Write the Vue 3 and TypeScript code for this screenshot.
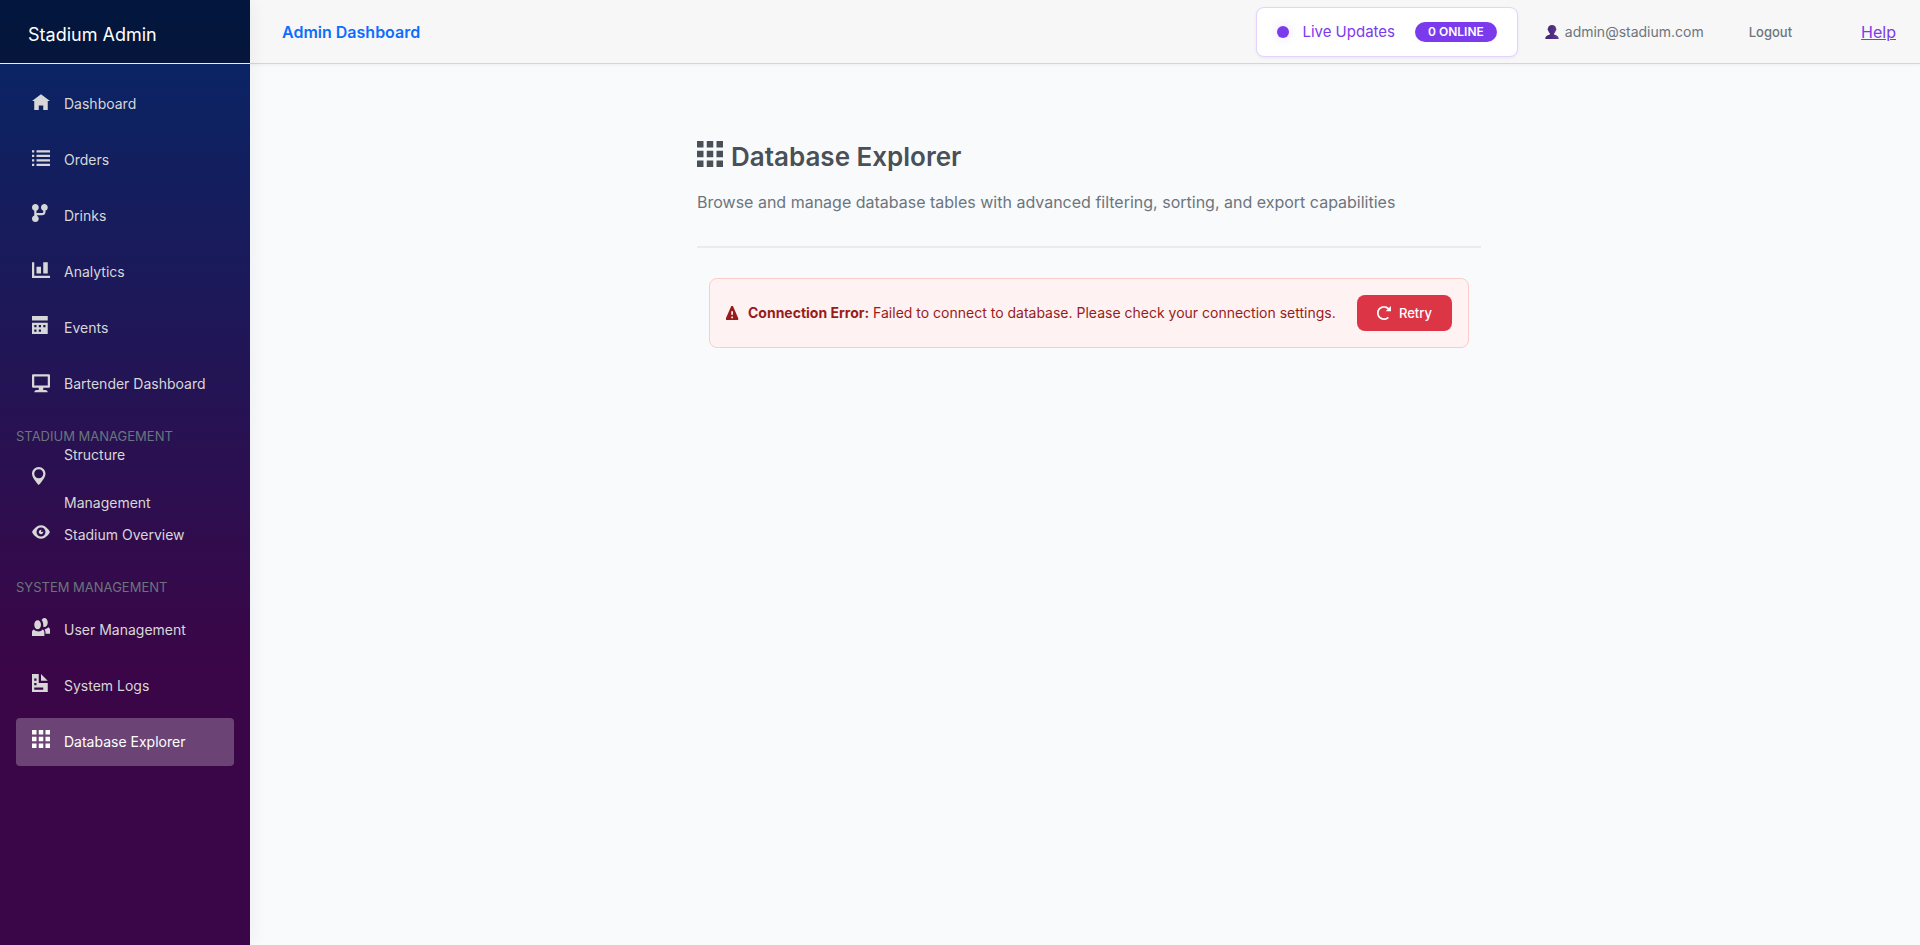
<script setup lang="ts">
interface NavItem {
  label: string
  icon: string
  active?: boolean
}
interface NavSection {
  heading?: string
  items: NavItem[]
}

// Icon outlines on an 8 x 8 grid
const icons: Record<string, string> = {
  home: 'M4 1l-4 3h1v4h2v-2h2v2h2v-4.03l1 .03-4-3z',
  list: 'M0 1v1h1v-1h-1zm2 0v1h6v-1h-6zm-2 2v1h1v-1h-1zm2 0v1h6v-1h-6zm-2 2v1h1v-1h-1zm2 0v1h6v-1h-6zm-2 2v1h1v-1h-1zm2 0v1h6v-1h-6z',
  fork: 'M1.5 0c-.83 0-1.5.67-1.5 1.5 0 .66.41 1.2 1 1.41v2.19c-.59.2-1 .75-1 1.41 0 .83.67 1.5 1.5 1.5s1.5-.67 1.5-1.5c0-.6-.34-1.1-.84-1.34.09-.09.21-.16.34-.16h2c.82 0 1.5-.68 1.5-1.5v-.59c.59-.2 1-.75 1-1.41 0-.83-.67-1.5-1.5-1.5s-1.5.67-1.5 1.5c0 .66.41 1.2 1 1.41v.59c0 .28-.22.5-.5.5h-2c-.17 0-.35.04-.5.09v-1.19c.59-.2 1-.75 1-1.41 0-.83-.67-1.5-1.5-1.5z',
  chart: 'M0 1v7h8v-1h-7v-6h-1zm5 0v5h2v-5h-2zm-3 2v3h2v-3h-2z',
  calendar: 'M0 0v2h7v-2h-7zm0 3v4.91c0 .05.04.09.09.09h6.81c.05 0 .09-.04.09-.09v-4.91h-7zm1 1h1v1h-1v-1zm2 0h1v1h-1v-1zm2 0h1v1h-1v-1zm-4 2h1v1h-1v-1zm2 0h1v1h-1v-1z',
  monitor: 'M.34 1a.5.5 0 0 0-.34.5v5a.5.5 0 0 0 .5.5h2.5v1h-1c-.55 0-1 .45-1 1h6c0-.55-.45-1-1-1h-1v-1h2.5a.5.5 0 0 0 .5-.5v-5a.5.5 0 0 0-.5-.5h-7.16zm.66 1h6v4h-6v-4z',
  marker: 'M3 0c-1.66 0-3 1.34-3 3 0 2 3 5 3 5s3-3 3-5c0-1.66-1.34-3-3-3zm0 1c1.11 0 2 .9 2 2 0 1.11-.89 2-2 2-1.1 0-2-.89-2-2 0-1.1.9-2 2-2z',
  eye: 'M4.03 1c-2.53 0-4.03 3-4.03 3s1.5 3 4.03 3c2.47 0 3.97-3 3.97-3s-1.5-3-3.97-3zm-.03 1c1.11 0 2 .9 2 2 0 1.11-.89 2-2 2-1.1 0-2-.89-2-2 0-1.1.9-2 2-2zm0 1c-.55 0-1 .45-1 1s.45 1 1 1 1-.45 1-1c0-.1-.04-.19-.06-.28-.08.16-.24.28-.44.28-.28 0-.5-.22-.5-.5 0-.2.12-.36.28-.44-.09-.03-.18-.06-.28-.06z',
  people: 'M5.5 0c-.51 0-.95.35-1.22.88.45.54.72 1.28.72 2.13 0 .29-.03.55-.09.81.19.11.38.19.59.19.83 0 1.5-.9 1.5-2s-.67-2-1.5-2zm-3 1c-.83 0-1.5.9-1.5 2s.67 2 1.5 2 1.5-.9 1.5-2-.67-2-1.5-2zm4.75 3.16c-.43.51-1.02.82-1.69.84.27.38.44.84.44 1.34v.66h2v-1.66c0-.52-.31-.97-.75-1.19zm-6.5 1c-.44.22-.75.67-.75 1.19v1.66h5.5v-1.66c0-.52-.31-.97-.75-1.19-.45.53-1.06.84-1.75.84s-1.8-.32-2.25-.84z',
  document: 'M0 0v8h7v-4h-4v-4h-3zm4 0v3h3l-3-3zm-3 2h1v1h-1v-1zm0 2h1v1h-1v-1zm0 2h4v1h-4v-1z',
  grid: 'M0 0v2h2v-2h-2zm3 0v2h2v-2h-2zm3 0v2h2v-2h-2zm-6 3v2h2v-2h-2zm3 0v2h2v-2h-2zm3 0v2h2v-2h-2zm-6 3v2h2v-2h-2zm3 0v2h2v-2h-2zm3 0v2h2v-2h-2z',
  warning: 'M3.09 0c-.06 0-.1.04-.13.09l-2.94 6.81c-.02.05-.03.13-.03.19v.81c0 .05.04.09.09.09h6.81c.05 0 .09-.04.09-.09v-.81c0-.05-.01-.14-.03-.19l-2.94-6.81c-.02-.05-.07-.09-.13-.09h-.81zm-.09 3h1v2h-1v-2zm0 3h1v1h-1v-1z',
  reload: 'M4 0c-2.2 0-4 1.8-4 4s1.8 4 4 4c1.1 0 2.12-.43 2.84-1.16l-.72-.72c-.54.54-1.29.88-2.13.88-1.66 0-3-1.34-3-3s1.34-3 3-3c.83 0 1.55.36 2.09.91l-1.09 1.09h3v-3l-1.19 1.19c-.72-.72-1.71-1.19-2.81-1.19z',
}

const sections: NavSection[] = [
  {
    items: [
      { label: 'Dashboard', icon: 'home' },
      { label: 'Orders', icon: 'list' },
      { label: 'Drinks', icon: 'fork' },
      { label: 'Analytics', icon: 'chart' },
      { label: 'Events', icon: 'calendar' },
      { label: 'Bartender Dashboard', icon: 'monitor' },
    ],
  },
  {
    heading: 'Stadium Management',
    items: [
      { label: 'Structure Management', icon: 'marker' },
      { label: 'Stadium Overview', icon: 'eye' },
    ],
  },
  {
    heading: 'System Management',
    items: [
      { label: 'User Management', icon: 'people' },
      { label: 'System Logs', icon: 'document' },
      { label: 'Database Explorer', icon: 'grid', active: true },
    ],
  },
]
</script>

<template>
  <div class="page">
    <aside class="sidebar">
      <div class="brand"><a href="#">Stadium Admin</a></div>
      <nav class="nav">
        <template v-for="(section, i) in sections" :key="i">
          <h2 v-if="section.heading" class="nav-heading">{{ section.heading }}</h2>
          <a
            v-for="item in section.items"
            :key="item.label"
            href="#"
            class="nav-link"
            :class="{ active: item.active }"
          >
            <svg class="nav-icon" viewBox="0 0 8 8" aria-hidden="true"><path :d="icons[item.icon]" /></svg>
            <span class="nav-text">{{ item.label }}</span>
          </a>
        </template>
      </nav>
    </aside>

    <div class="main">
      <header class="topbar">
        <span class="topbar-title">Admin Dashboard</span>
        <div class="live">
          <span class="live-dot"></span>
          <span class="live-label">Live Updates</span>
          <span class="live-badge">0 ONLINE</span>
        </div>
        <div class="user">
          <svg class="user-icon" viewBox="0 0 14 14" aria-hidden="true">
            <defs>
              <linearGradient id="bust" x1="0" y1="0" x2="1" y2="0">
                <stop offset="0" stop-color="#3f2470" />
                <stop offset="1" stop-color="#5f3a94" />
              </linearGradient>
            </defs>
            <path
              fill="url(#bust)"
              d="M7 0C4.600 0 3 1.300 3 3.600c-.6.200-.6 1.700.200 2 .3 1.300.9 2.200 1.700 2.800v1.200C3.200 10.200.5 10.600.3 14h13.400c-.2-3.400-2.900-3.800-4.600-4.400V8.400c.8-.6 1.400-1.500 1.700-2.800.8-.3.800-1.800.2-2C11 1.300 9.400 0 7 0z"
            />
          </svg>
          <span>admin@stadium.com</span>
        </div>
        <button type="button" class="logout">Logout</button>
        <a href="#" class="help">Help</a>
      </header>

      <main class="content">
        <div class="explorer">
          <div class="explorer-head">
            <h1>
              <svg class="title-icon" viewBox="0 0 8 8" aria-hidden="true"><path :d="icons.grid" /></svg>
              <span>Database Explorer</span>
            </h1>
            <p>Browse and manage database tables with advanced filtering, sorting, and export capabilities</p>
          </div>
          <div class="alert" role="alert">
            <svg class="alert-icon" viewBox="0 0 8 8" aria-hidden="true"><path :d="icons.warning" /></svg>
            <span class="alert-text"><strong>Connection Error:</strong> Failed to connect to database. Please check your connection settings.</span>
            <button type="button" class="retry">
              <svg class="retry-icon" viewBox="0 0 8 8" aria-hidden="true"><path :d="icons.reload" /></svg>
              Retry
            </button>
          </div>
        </div>
      </main>
    </div>
  </div>
</template>

<style>
body {
  background: #f9fafc;
}
</style>

<style scoped>
.page {
  display: flex;
  min-height: 100vh;
  font-family: Inter, "Liberation Sans", sans-serif;
  font-size: 16px;
}
.page * {
  box-sizing: border-box;
}
svg {
  display: block;
  flex: none;
  fill: currentColor;
  overflow: visible;
}

/* Sidebar */
.sidebar {
  flex: 0 0 250px;
  background: linear-gradient(180deg, #052767 0%, #3a0647 70%);
  box-shadow: 2px 0 16px rgba(0, 0, 0, 0.05);
  z-index: 1;
}
.brand {
  display: flex;
  align-items: center;
  height: 64px;
  padding: 6px 28px 0;
  background: rgba(0, 0, 0, 0.4);
  border-bottom: 1px solid #e9ecf4;
}
.brand a {
  color: #fff;
  font-size: 18px;
  text-decoration: none;
}
.nav {
  display: flex;
  flex-direction: column;
  gap: 8px;
  padding: 16px;
}
.nav-heading {
  margin: 0;
  padding: 10px 0 9px;
  color: #6c757d;
  font-size: 13px;
  font-weight: 400;
  line-height: 20px;
  text-transform: uppercase;
}
.nav-heading + .nav-link {
  margin-top: -8px;
}
.nav-link {
  display: flex;
  align-items: center;
  height: 48px;
  padding: 0 20px 0 16px;
  border-radius: 4px;
  color: #d7d7d7;
  font-size: 14px;
  line-height: 48px;
  text-decoration: none;
}
.nav-link.active {
  background: rgba(255, 255, 255, 0.25);
  color: #fff;
}
.nav-icon {
  width: 18px;
  height: 18px;
  margin: 0 14px 6px 0;
}

/* Top bar */
.main {
  flex: 1;
  min-width: 0;
}
.topbar {
  display: flex;
  align-items: center;
  height: 64px;
  padding: 0 24px 0 32px;
  background: #f7f7f7;
  border-bottom: 1px solid #d6d5d5;
  box-shadow: 0 1px 3px rgba(0, 0, 0, 0.05);
}
.topbar-title {
  margin-right: auto;
  color: #0d6efd;
  font-weight: 600;
}
.live {
  display: flex;
  align-items: center;
  height: 50px;
  padding: 0 20px;
  border: 1px solid #e1d5fb;
  border-radius: 8px;
  background: #fff;
  box-shadow: 0 1px 3px rgba(124, 58, 237, 0.1);
  color: #7c3aed;
}
.live-dot {
  width: 12px;
  height: 12px;
  margin-right: 13px;
  border-radius: 50%;
  background: #7c3aed;
  box-shadow: 0 0 12px rgba(124, 58, 237, 0.2);
}
.live-label {
  margin-right: 20px;
  font-size: 15px;
}
.live-badge {
  padding: 0 13px;
  border-radius: 10px;
  background: #7c3aed;
  color: #fff;
  font-size: 12px;
  font-weight: 600;
  line-height: 20px;
}
.user {
  display: flex;
  align-items: center;
  gap: 6px;
  margin-left: 27px;
  color: #6c757d;
  font-size: 14px;
}
.user-icon {
  width: 14px;
  height: 14px;
}
.logout {
  margin-left: 31px;
  padding: 6px 14px;
  border: 0;
  background: none;
  color: #6c757d;
  font: 500 13px Inter, "Liberation Sans", sans-serif;
}
.help {
  margin-left: 55px;
  color: #7c3aed;
}

/* Content */
.content {
  padding: 72px 24px 32px 32px;
}
.explorer {
  max-width: 784px;
  margin: 0 auto;
}
.explorer-head {
  margin-bottom: 30px;
  padding-bottom: 32px;
  border-bottom: 2px solid #e9ecef;
}
h1 {
  display: flex;
  align-items: center;
  gap: 8px;
  margin: 0 0 12px;
  color: #495057;
  font-size: 26px;
  font-weight: 600;
  line-height: 42px;
}
.title-icon {
  width: 26px;
  height: 26px;
  margin-bottom: 6px;
}
.explorer-head p {
  margin: 0;
  color: #6c757d;
  line-height: 24px;
}
.alert {
  display: flex;
  align-items: center;
  min-height: 70px;
  margin: 0 12px;
  padding: 16px;
  border: 1px solid #fecaca;
  border-radius: 8px;
  background: #fef2f2;
  color: #991b1b;
  font-size: 14px;
}
.alert-icon {
  width: 14px;
  height: 14px;
  margin-right: 8px;
}
.alert-text {
  flex: 1;
  padding-bottom: 2px;
}
.retry {
  display: flex;
  align-items: center;
  justify-content: center;
  gap: 8px;
  height: 36px;
  padding: 0 20px;
  border: 0;
  border-radius: 8px;
  background: #dc3545;
  color: #fff;
  font: 500 13px Inter, "Liberation Sans", sans-serif;
}
.retry-icon {
  width: 14px;
  height: 14px;
}
</style>
